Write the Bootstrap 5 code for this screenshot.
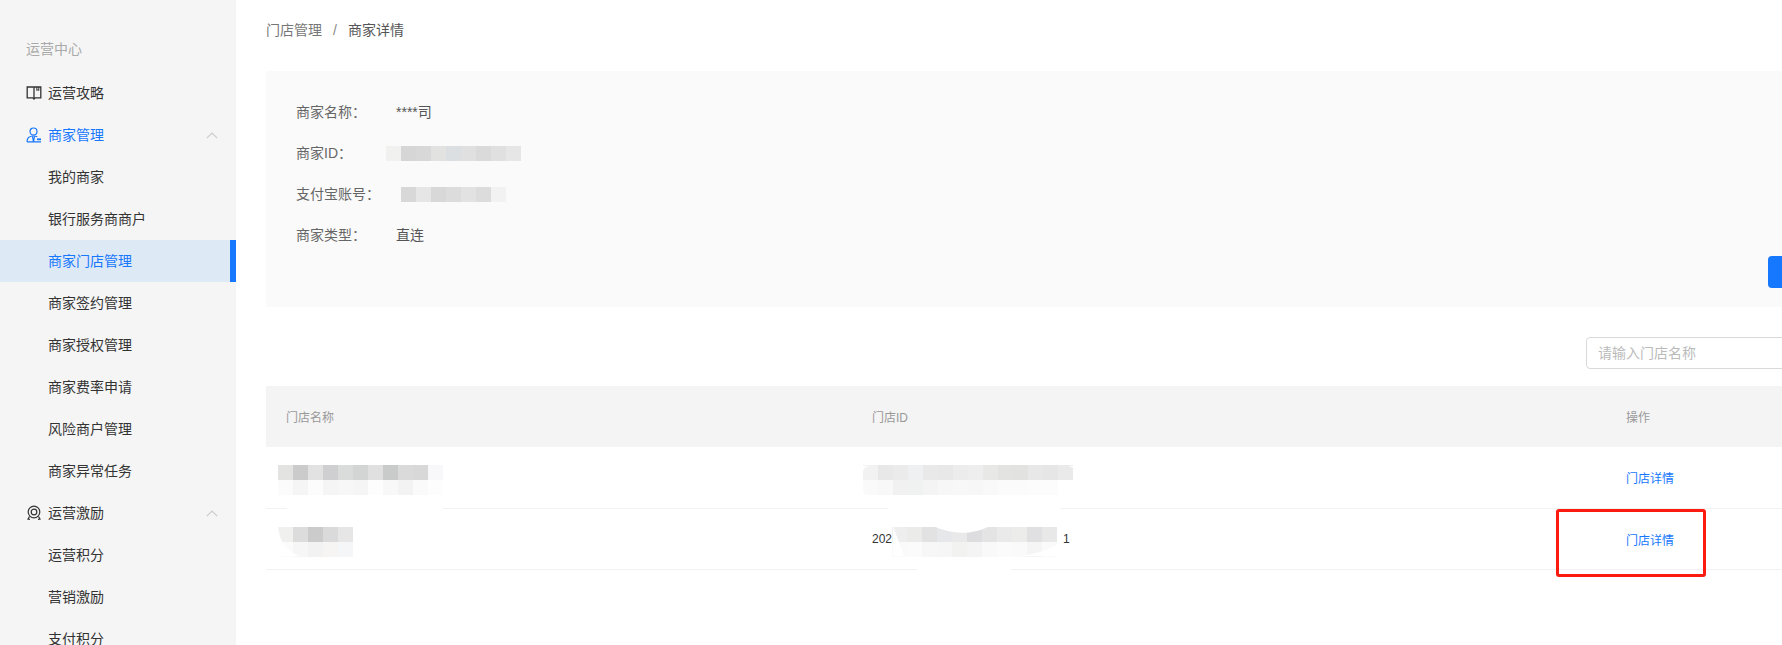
<!DOCTYPE html>
<html lang="zh-CN">
<head>
    <meta charset="UTF-8">
    <title>商家详情</title>
    <link href="https://cdn.jsdelivr.net/npm/bootstrap@5.3.0/dist/css/bootstrap.min.css" rel="stylesheet">
    <style>
        html, body {
            height: 100%;
            overflow: hidden;
        }
        body {
            font-family: "Liberation Sans", "Noto Sans CJK SC", sans-serif;
            font-size: 14px;
            color: #333;
        }
        .side-bar {
            width: 236px;
            flex: none;
            background: #f5f5f5;
            padding-top: 28px;
        }
        .side-title {
            height: 42px;
            line-height: 42px;
            margin-bottom: 2px;
            padding-left: 26px;
            color: #aaa;
        }
        .side-item {
            height: 42px;
            padding-left: 48px;
            padding-right: 18px;
            color: #333;
            text-decoration: none;
            position: relative;
        }
        .side-item.is-parent {
            padding-left: 26px;
        }
        .side-item.is-parent svg.side-icon {
            margin-right: 6px;
            flex: none;
        }
        .side-item.is-open {
            color: #1677ff;
        }
        .side-item.is-active {
            color: #1677ff;
            background: #dde9f4;
            border-right: 6px solid #1677ff;
        }
        .side-arrow {
            margin-left: auto;
        }
        .main-area {
            min-width: 0;
            overflow: hidden;
            padding-left: 30px;
        }
        .main-inner {
            width: 1580px;
        }
        .crumbs {
            height: 71px;
            padding-bottom: 11px;
            color: #777;
        }
        .crumbs .crumb-sep {
            margin: 0 11px;
            color: #888;
        }
        .crumbs .crumb-last {
            color: #555;
        }
        .info-panel {
            height: 236px;
            background: #fafafa;
            padding: 21px 0 19px 30px;
        }
        .info-row {
            height: 41.5px;
            color: #666;
        }
        .info-label {
            width: 100px;
        }
        .info-value {
            color: #555;
        }
        .shift-left {
            margin-left: -10px;
        }
        .panel-btn {
            width: 78px;
            height: 32px;
            background: #1677ff;
            border: 0;
            border-radius: 4px;
        }
        .search-row {
            height: 79px;
            padding-top: 30px;
        }
        .search-input {
            width: 260px;
            height: 32px;
            border: 1px solid #d9d9d9;
            border-radius: 4px;
            padding: 0 11px;
            font-size: 14px;
            color: #333;
            outline: 0;
        }
        .search-input::placeholder {
            color: #bbb;
        }
        .store-table {
            width: 100%;
            table-layout: fixed;
            border-collapse: collapse;
            font-size: 12px;
        }
        .store-table th {
            height: 61px;
            background: #f4f4f4;
            color: #999;
            font-weight: 400;
            padding: 2px 0 0 20px;
            vertical-align: middle;
        }
        .store-table td {
            height: 61px;
            padding: 4px 0 0 20px;
            border-bottom: 1px solid #f2f2f2;
            vertical-align: middle;
            color: #333;
        }
        .store-table td.mosaic-cell {
            padding-top: 6px;
        }
        .col-name { width: 586px; }
        .col-id { width: 754px; }
        .store-link {
            color: #1677ff;
            text-decoration: none;
        }
        .mosaic {
            display: block;
            flex: none;
        }
        .mosaic-name {
            margin-left: -8px;
        }
        .mosaic-id {
            margin-left: -9px;
        }
        .id-text {
            display: flex;
            align-items: center;
            height: 30px;
        }
        .id-part {
            margin-bottom: 6px;
        }
        .id-end {
            margin-left: 2px;
        }
        .smudges {
            position: absolute;
            left: 0;
            top: 0;
            pointer-events: none;
        }
        .mark-box {
            position: absolute;
            left: 1556px;
            top: 509px;
            width: 150px;
            height: 68px;
            border: 3px solid #fb1b0f;
            border-radius: 3px;
        }
    </style>
</head>
<body>
    <div class="d-flex h-100">
        <nav class="side-bar" id="sideBar"></nav>
        <main class="main-area flex-grow-1">
            <div class="main-inner">
                <div class="crumbs d-flex align-items-center">
                    <span>门店管理</span><span class="crumb-sep">/</span><span class="crumb-last">商家详情</span>
                </div>

                <section class="info-panel d-flex flex-column">
                    <div class="info-row d-flex align-items-center"><span class="info-label">商家名称：</span><span class="info-value">****司</span></div>
                    <div class="info-row d-flex align-items-center"><span class="info-label">商家ID：</span>
                        <svg class="mosaic shift-left" data-cells="f1f1f0,d6d6d6,d8d8d8,e2e2e0,dcdfe2,e0e0e0,dadada,e0e0e0,e6e6e6" width="135" height="15"></svg>
                    </div>
                    <div class="info-row d-flex align-items-center"><span class="info-label">支付宝账号：</span>
                        <svg class="mosaic shift-left" data-cells="fafafa,d8d8d8,e6e6e6,d8d8d8,dcdcdc,e2e2e2,dcdcdc,f2f2f2" width="120" height="15"></svg>
                    </div>
                    <div class="info-row d-flex align-items-center"><span class="info-label">商家类型：</span><span class="info-value">直连</span></div>
                    <div class="d-flex justify-content-end mt-auto"><button class="panel-btn" type="button" aria-label="操作"></button></div>
                </section>

                <div class="search-row d-flex justify-content-end">
                    <input class="search-input" type="text" placeholder="请输入门店名称">
                </div>

                <table class="store-table">
                    <colgroup><col class="col-name"><col class="col-id"><col></colgroup>
                    <thead>
                        <tr><th>门店名称</th><th>门店ID</th><th>操作</th></tr>
                    </thead>
                    <tbody>
                        <tr>
                            <td class="mosaic-cell"><svg class="mosaic mosaic-name" data-cells="e3e3e2,cbcbcb,e2e2e2,cfcfd1,dadcdc,d3d5d5,e0e0e0,c9cbca,dadada,d8d8d8,f8f8fa" data-cells2="fbfbfb,f5f5f5,fcfcfc,f5f5f5,f7f7f7,f5f5f5,fcfdfc,f8f8f8,f3f3f3,fafafa,fdfdfd" width="165" height="30"></svg></td>
                            <td class="mosaic-cell"><svg class="mosaic mosaic-id" data-cells="f2f2f2,e8e8e8,ebebeb,eef0f1,e9e9e9,e8e8e8,ececec,eeeeee,e8e8e6,e3e3e1,e2e2e0,e8e8e8,e6e6e6,eaeaea" data-cells2="fafafa,f8f8f8,f1f1f1,f0f2f2,f4f4f4,f7f7f7,f8f8f8,f7f7f7,f9f9f9,fbfbfb,fbfbfb,fcfcfc,fcfcfc,ffffff" width="213" height="30"></svg></td>
                            <td><a class="store-link" href="#">门店详情</a></td>
                        </tr>
                        <tr>
                            <td class="mosaic-cell"><svg class="mosaic mosaic-name" data-cells="f0f0ef,dcdcdc,cbcbcb,dadada,e6e6e6" data-cells2="fbfbfb,f6f6f6,f2f2f2,f6f5f3,f4f6f8" width="75" height="30"></svg></td>
                            <td class="mosaic-cell"><div class="id-text"><span class="id-part">202</span><svg class="mosaic" data-cells="eeeeee,ebebe9,e2e2e2,e6e7ea,e9e9e9,dddcdf,e4e4e4,eaeaea,ececea,e0e0e2,e8e8e8" data-cells2="fafafa,fbfbfb,f7f7f7,f6f6f6,f2f2f0,f4f4f4,f9f9f9,fbfbfb,fafafa,f5f5f5,fafafa" width="169" height="30"></svg><span class="id-part id-end">1</span></div></td>
                            <td><a class="store-link" href="#">门店详情</a></td>
                        </tr>
                    </tbody>
                </table>
            </div>
        </main>
    </div>

    <!-- white retouching strokes lying over the table -->
    <svg class="smudges" width="1782" height="645" fill="#fff">
        <rect x="285" y="497" width="160" height="13" rx="6"/>
        <path d="M888 497h172v14h-73l1 16q-26 12-55 -1l1-15h-46z"/>
        <path d="M863 466h7q-7 0-7 7zM863 496v-8q0 8 7 8zM1076 466h-8q8 2 8 7zM1076 496v-14q0 14-14 14z"/>
        <path d="M893 526l11 30h-11zM1062 541v15h-42q30-4 42-15z"/>
        <path d="M278 526q2 24 22 30h-22z"/>
        <rect x="915" y="562" width="98" height="8" rx="4"/>
    </svg>
    <div class="mark-box"></div>

    <script>
        const icons = {
            book: '<svg class="side-icon" width="16" height="16" viewBox="0 0 16 16" fill="none" stroke="#333" stroke-width="1.3"><path d="M1.200 2h13.600v10.800H9.300L8 14l-1.300-1.200H1.200zM8 2v12"/><path d="M10.800 2v3.500l1-.8 1 .8V2" stroke-width="1"/></svg>',
            user: '<svg class="side-icon" width="16" height="16" viewBox="0 0 16 16" fill="none" stroke="#1677ff" stroke-width="1.2"><circle cx="7.500" cy="4.500" r="3.500"/><path d="M1 14.800c0-3.700 2.400-5.800 6.500-5.800 1.500 0 2.800.3 3.800.8M1 14.800h14M6.500 9.500l1 5.300 1-5.300"/><path d="M11 12.300h4" stroke-width="1.800"/></svg>',
            medal: '<svg class="side-icon" width="16" height="16" viewBox="0 0 16 16" fill="none" stroke="#333" stroke-width="1.200"><circle cx="8" cy="7" r="5.800"/><circle cx="8" cy="7" r="2.800"/><path d="M3.500 11.500L2 14l2 .3M12.500 11.500L14 14l-2 .3"/></svg>'
        };
        const arrow = '<svg class="side-arrow" width="12" height="7" viewBox="0 0 12 7" fill="none" stroke="#ccc" stroke-width="1.200"><path d="M.8 6.200L6 1l5.200 5.200"/></svg>';

        const menu = [
            { text: '运营攻略', icon: 'book' },
            { text: '商家管理', icon: 'user', open: true, arrow: true },
            { text: '我的商家' },
            { text: '银行服务商商户' },
            { text: '商家门店管理', active: true },
            { text: '商家签约管理' },
            { text: '商家授权管理' },
            { text: '商家费率申请' },
            { text: '风险商户管理' },
            { text: '商家异常任务' },
            { text: '运营激励', icon: 'medal', arrow: true },
            { text: '运营积分' },
            { text: '营销激励' },
            { text: '支付积分' }
        ];

        let html = '<div class="side-title">运营中心</div>';
        menu.forEach(item => {
            let cls = 'side-item d-flex align-items-center';
            if (item.icon) cls += ' is-parent';
            if (item.open) cls += ' is-open';
            if (item.active) cls += ' is-active';
            html += `<a class="${cls}" href="#">${item.icon ? icons[item.icon] : ''}<span>${item.text}</span>${item.arrow ? arrow : ''}</a>`;
        });
        document.getElementById('sideBar').innerHTML = html;

        // mosaic blocks, 15px cells
        document.querySelectorAll('svg.mosaic').forEach(svg => {
            let out = '';
            [svg.dataset.cells, svg.dataset.cells2].forEach((row, y) => {
                if (!row) return;
                row.split(',').forEach((c, x) => {
                    out += `<rect x="${x * 15}" y="${y * 15}" width="15" height="15" fill="#${c}"/>`;
                });
            });
            svg.innerHTML = out;
        });
    </script>
    <script src="https://cdn.jsdelivr.net/npm/bootstrap@5.3.0/dist/js/bootstrap.bundle.min.js"></script>
</body>
</html>
